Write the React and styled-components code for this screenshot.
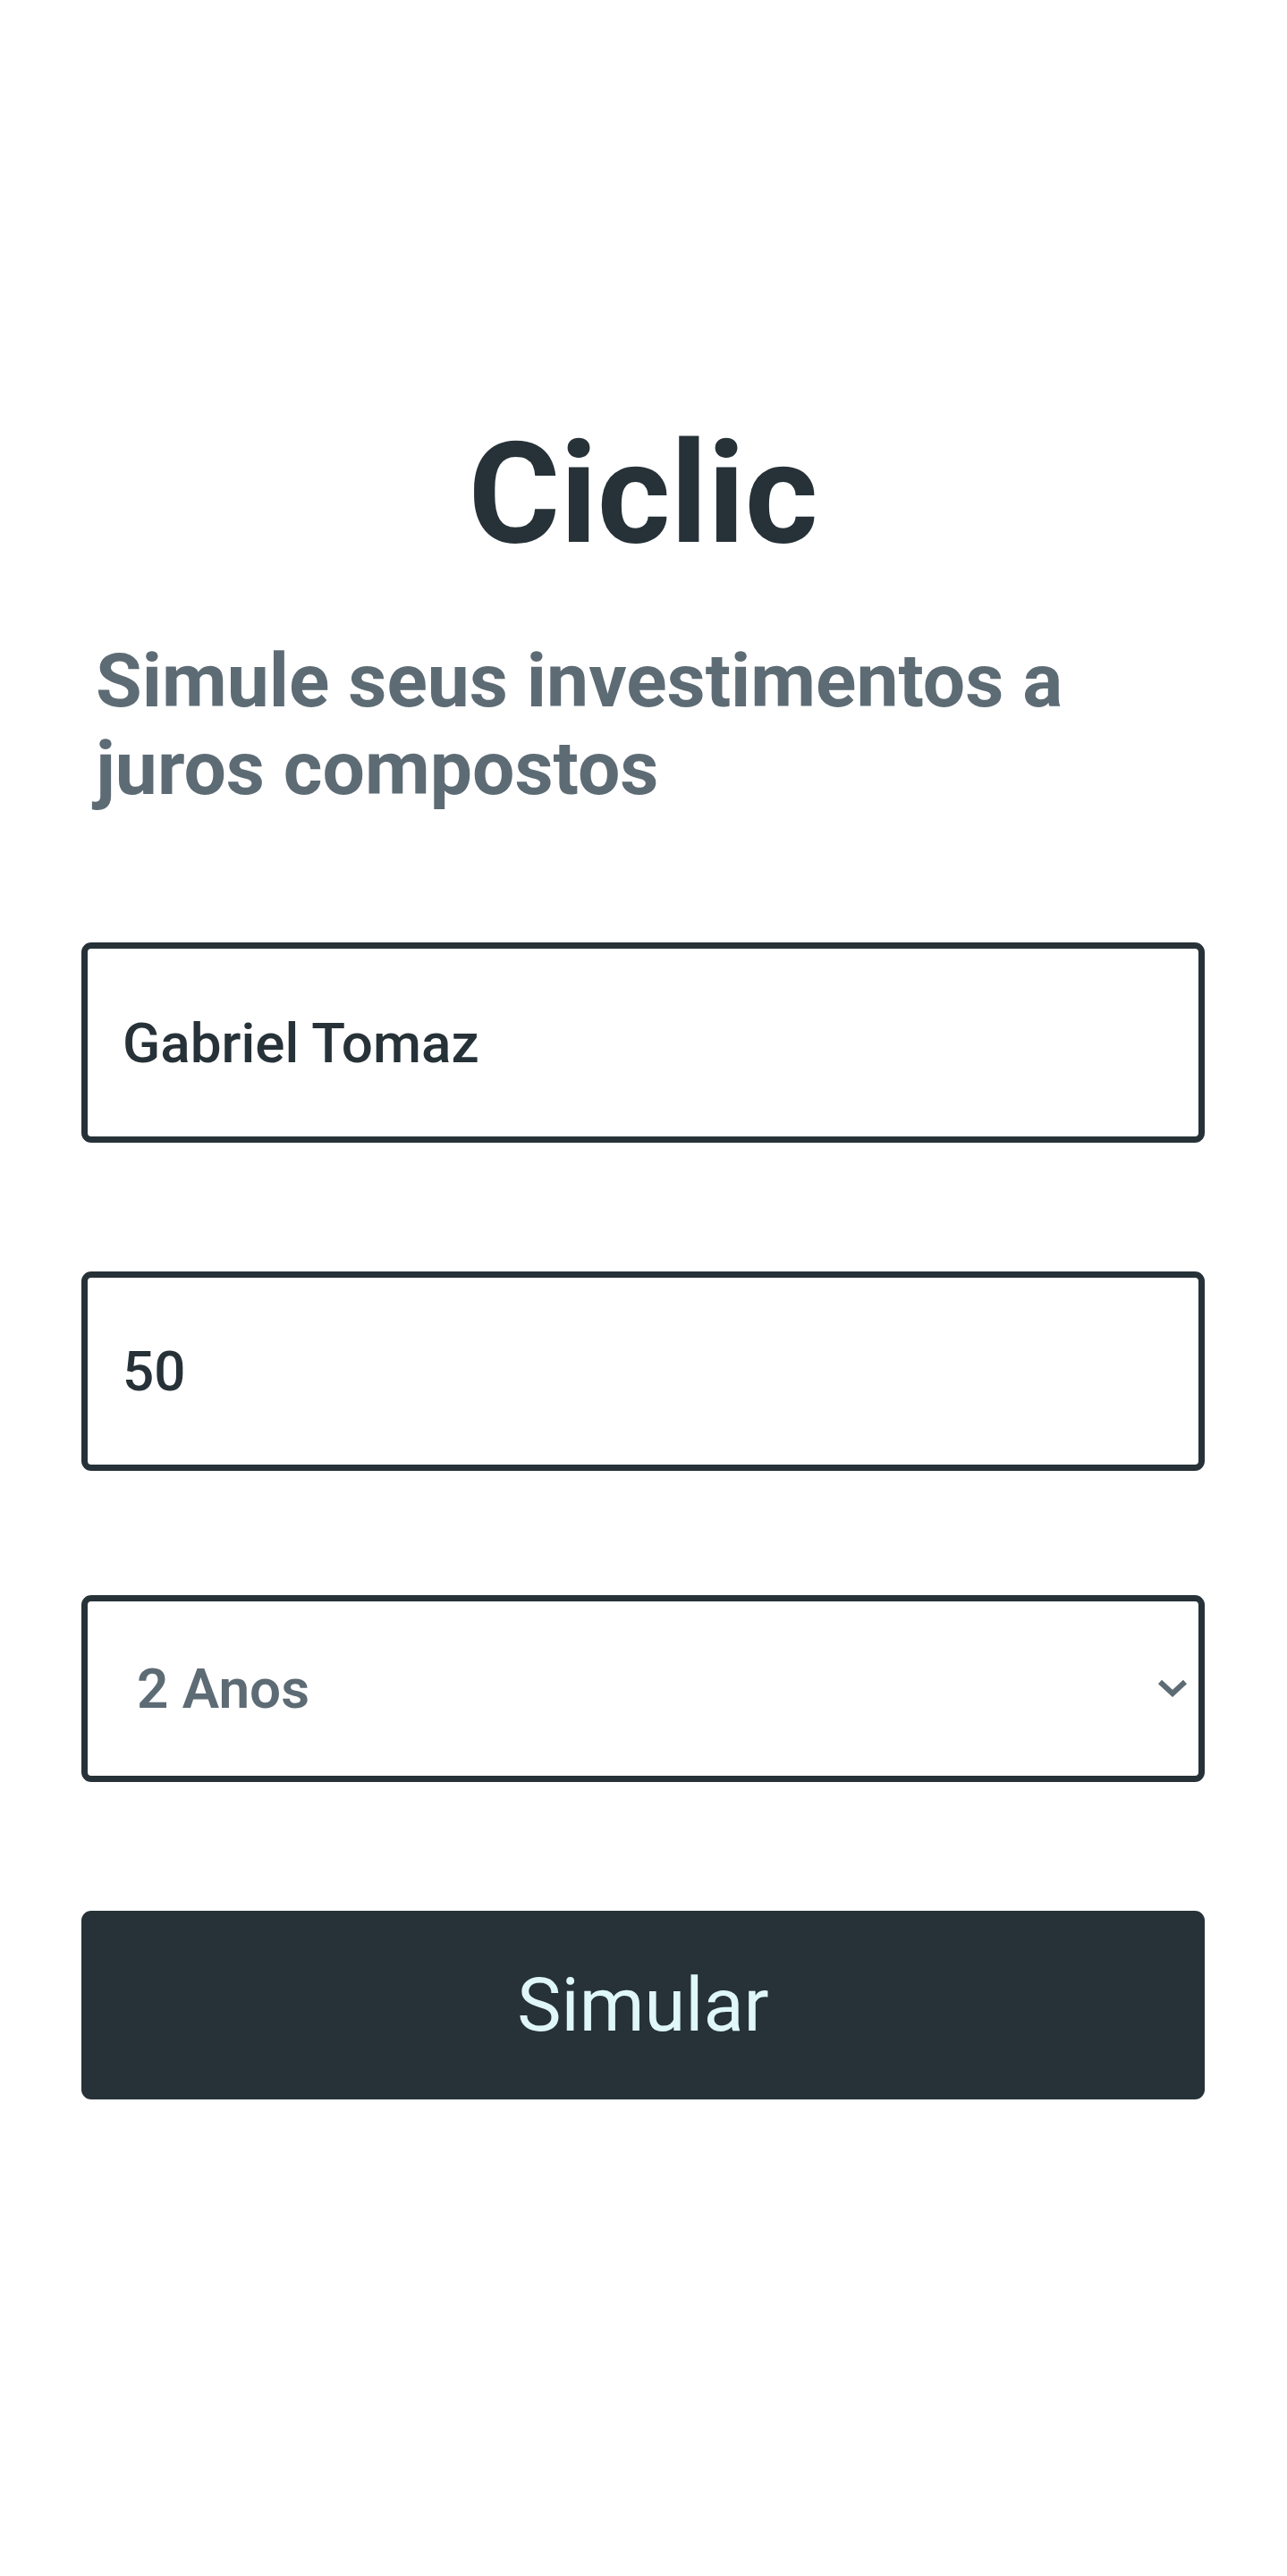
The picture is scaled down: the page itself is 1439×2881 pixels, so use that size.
import React from "react";
import styled, { createGlobalStyle } from "styled-components";

const Global = createGlobalStyle`
  html, body { margin: 0; padding: 0; background: #ffffff; }
  body { font-family: Roboto, "Liberation Sans", Arial, sans-serif; }
  * { box-sizing: border-box; }
`;

const Page = styled.main`
  width: 1439px;
  min-height: 2881px;
  padding: 456px 92px 0 91px;
  display: flex;
  flex-direction: column;
`;

const Title = styled.h1`
  margin: 0;
  font-family: Roboto, "Liberation Sans", Arial, sans-serif;
  font-weight: 700;
  font-size: 157px;
  line-height: 192px;
  color: #263238;
  text-align: center;
`;

const Subtitle = styled.h2`
  margin: 65px 0 0;
  padding: 0 16px;
  font-family: Roboto, "Liberation Sans", Arial, sans-serif;
  font-weight: 700;
  font-size: 84px;
  line-height: 98px;
  color: #5d6b74;
`;

const Form = styled.form`
  margin-top: 145px;
  display: flex;
  flex-direction: column;
  gap: 144px;
`;

const Field = styled.input`
  display: block;
  width: 100%;
  height: ${(p) => p.$h}px;
  padding: 0 39px;
  border: 7px solid #263238;
  border-radius: 11px;
  background: #ffffff;
  font-family: Roboto, "Liberation Sans", Arial, sans-serif;
  font-weight: 500;
  font-size: 62px;
  color: #263238;
  outline: none;
`;

const SelectWrap = styled.div`
  position: relative;
  width: 100%;
  margin-top: -5px;
`;

const Select = styled.select`
  display: block;
  width: 100%;
  height: 209px;
  padding: 0 80px 0 55px;
  border: 7px solid #263238;
  border-radius: 11px;
  background: #ffffff;
  appearance: none;
  -webkit-appearance: none;
  font-family: Roboto, "Liberation Sans", Arial, sans-serif;
  font-weight: 600;
  font-size: 62px;
  color: #5d6b74;
  outline: none;
`;

const Chevron = styled.svg`
  position: absolute;
  right: 19px;
  top: 94px;
  width: 34px;
  height: 20px;
  pointer-events: none;
`;

const Button = styled.button`
  display: block;
  width: 100%;
  height: 211px;
  border: none;
  border-radius: 11px;
  background: #263238;
  color: #e0f7fa;
  font-family: Roboto, "Liberation Sans", Arial, sans-serif;
  font-weight: 400;
  font-size: 83px;
  cursor: pointer;
`;

export default function App() {
  return (
    <>
      <Global />
      <Page>
        <Title>Ciclic</Title>
        <Subtitle>Simule seus investimentos a juros compostos</Subtitle>
        <Form onSubmit={(e) => e.preventDefault()}>
          <Field $h={224} type="text" defaultValue="Gabriel Tomaz" />
          <Field $h={223} type="text" defaultValue="50" />
          <SelectWrap>
            <Select defaultValue="2">
              <option value="1">1 Ano</option>
              <option value="2">2 Anos</option>
              <option value="3">3 Anos</option>
            </Select>
            <Chevron viewBox="0 0 34 20" fill="none">
              <path d="M3 3 L17 16 L31 3" stroke="#5d6b74" strokeWidth="6" />
            </Chevron>
          </SelectWrap>
          <Button type="submit">Simular</Button>
        </Form>
      </Page>
    </>
  );
}
